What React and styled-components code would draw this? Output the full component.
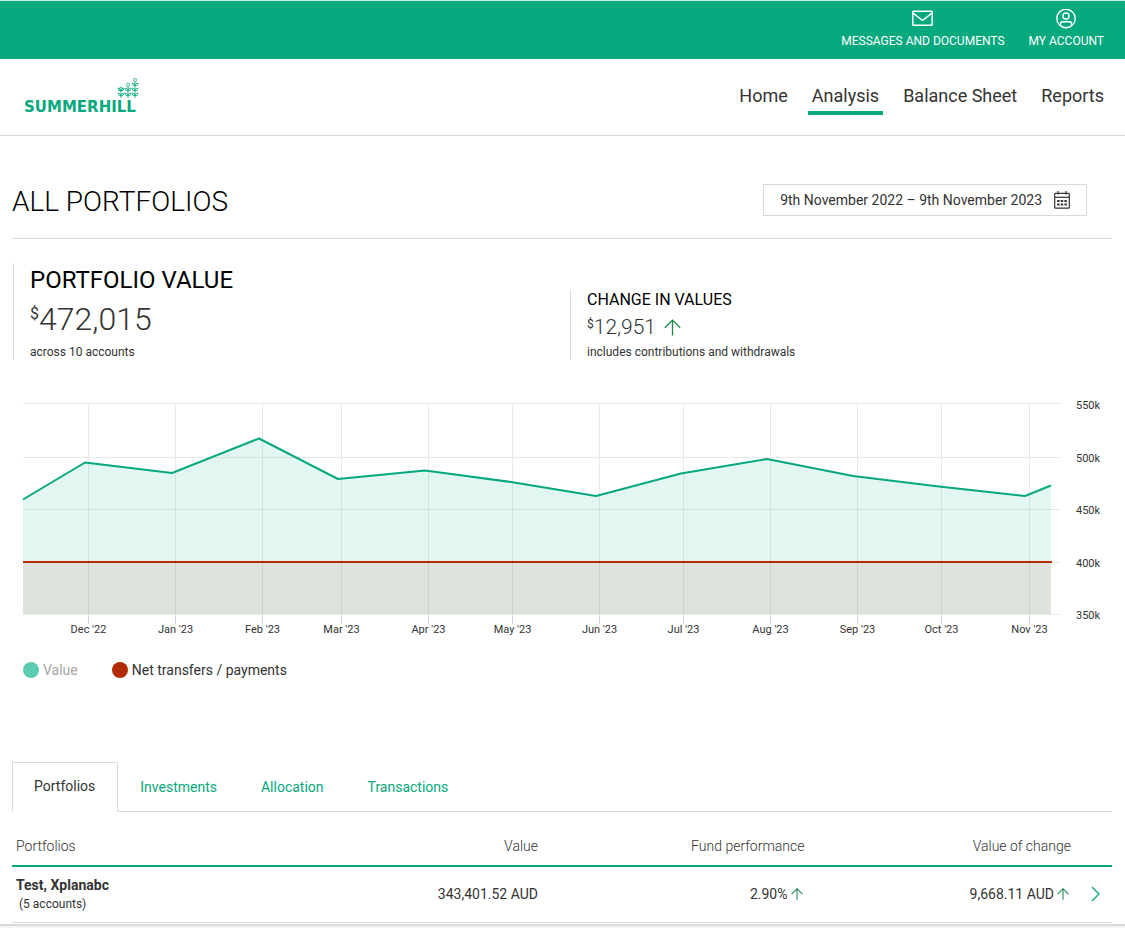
import React from "react";
import styled, { createGlobalStyle } from "styled-components";

const GREEN = "#06a87d";
const LINE = "#dadada";
const INK = "#333333";

const GlobalStyle = createGlobalStyle`
  *, *::before, *::after { box-sizing: border-box; }
  body {
    margin: 0;
    background: #ffffff;
    color: ${INK};
    font-family: Roboto, "Liberation Sans", sans-serif;
    font-size: 14px;
    line-height: 20px;
  }
  button { font: inherit; color: inherit; background: none; border: 0; padding: 0; cursor: pointer; }
  a { color: inherit; text-decoration: none; }
  h1, h2, h3, p { margin: 0; font-weight: 400; }
  svg { display: block; }
`;

const TopBar = styled.div`
  display: flex;
  justify-content: flex-end;
  gap: 24px;
  height: 59px;
  padding: 8px 21px 0;
  border-top: 1px solid #c4f3e8;
  background: ${GREEN};
`;

const TopLink = styled.a`
  display: flex;
  flex-direction: column;
  align-items: center;
  gap: 4px;
  color: #ffffff;
  font-size: 12px;
  line-height: 16px;
  text-transform: uppercase;
`;

const Header = styled.header`
  display: flex;
  align-items: center;
  justify-content: space-between;
  height: 77px;
  padding: 0 17px 0 25px;
  border-bottom: 1px solid ${LINE};
`;

const LogoLink = styled.a`
  display: block;
`;

const Nav = styled.nav`
  display: flex;
  gap: 16px;
  padding-top: 4px;
`;

const NavLink = styled.a`
  padding: 0 4px 3px;
  border-bottom: 4px solid ${(p) => (p.$active ? GREEN : "transparent")};
  font-size: 18px;
  line-height: 24px;
`;

const Page = styled.main`
  padding: 48px 13px 0 12px;
`;

const TitleRow = styled.div`
  display: flex;
  align-items: flex-start;
  justify-content: space-between;
  padding: 0 25px 18px 0;
  border-bottom: 1px solid ${LINE};
`;

const PageTitle = styled.h1`
  color: #000000;
  font-size: 28px;
  font-weight: 300;
  line-height: 36px;
`;

const DateButton = styled.button`
  && {
    display: flex;
    align-items: center;
    gap: 12px;
    height: 32px;
    padding: 0 16px;
    border: 1px solid ${LINE};
  }
`;

const Stats = styled.section`
  display: grid;
  grid-template-columns: 557fr 542fr;
  align-items: end;
  padding: 24px 0 0 1px;
`;

const Stat = styled.div`
  display: flex;
  flex-direction: column;
  padding-left: 16px;
  border-left: 1px solid ${LINE};
`;

const StatTitle = styled.h2`
  color: #000000;
  font-size: ${(p) => (p.$large ? "24px" : "16px")};
  line-height: ${(p) => (p.$large ? "34px" : "20px")};
`;

const StatValue = styled.p`
  display: flex;
  align-items: flex-start;
  padding-bottom: ${(p) => (p.$large ? "3px" : "0")};
  font-size: ${(p) => (p.$large ? "32px" : "21px")};
  font-weight: 300;
  line-height: ${(p) => (p.$large ? "44px" : "34px")};
`;

const Currency = styled.span`
  font-size: ${(p) => (p.$large ? "16px" : "12px")};
  font-weight: 400;
  line-height: ${(p) => (p.$large ? "34px" : "28px")};
`;

const ValueIcon = styled.span`
  padding: 9px 0 0 8px;
`;

const StatNote = styled.p`
  font-size: 12px;
  line-height: 16px;
`;

const ChartBox = styled.section`
  padding-top: 36px;
`;

const Chart = styled.svg`
  width: 100%;
  height: auto;
  text {
    fill: ${INK};
    font-size: 11px;
  }
`;

const Legend = styled.div`
  display: flex;
  gap: 34px;
  padding: 20px 11px 0;
`;

const LegendItem = styled.button`
  && {
    display: flex;
    align-items: center;
    gap: 4px;
    color: ${(p) => (p.$muted ? "#a6a6a6" : INK)};
  }
`;

const Dot = styled.span`
  width: 16px;
  height: 16px;
  border-radius: 50%;
  background: ${(p) => p.$color};
`;

const Tabs = styled.div`
  display: flex;
  margin-top: 82px;
  box-shadow: inset 0 -1px 0 ${LINE};
`;

const Tab = styled.button`
  && {
    height: 50px;
    padding: ${(p) => (p.$active ? "0 22px 4px 21px" : "0 21px 2px")};
    border: 1px solid transparent;
    border-bottom: 0;
    color: ${GREEN};
    ${(p) =>
      p.$active &&
      `
      border-color: ${LINE};
      background: #ffffff;
      color: ${INK};
    `}
  }
`;

const Table = styled.table`
  width: 100%;
  margin-top: 14px;
  border-collapse: collapse;
  table-layout: fixed;
`;

const HeadCell = styled.th`
  height: 40px;
  padding: 0 7px 0 4px;
  border-bottom: 2px solid ${GREEN};
  font-weight: 300;
  text-align: ${(p) => (p.$start ? "left" : "right")};
  width: ${(p) => (p.$narrow ? "34px" : "auto")};
`;

const Cell = styled.td`
  height: 56px;
  padding: 0 7px 0 4px;
  border-bottom: 1px solid ${LINE};
  text-align: ${(p) => (p.$start ? "left" : "right")};
`;

const Amount = styled.span`
  display: flex;
  align-items: center;
  justify-content: flex-end;
  gap: 3px;
  padding-right: 2px;
`;

const AccountName = styled.a`
  display: block;
  font-weight: 700;
`;

const AccountNote = styled.span`
  display: block;
  padding-left: 3px;
  font-size: 12px;
  line-height: 18px;
`;

const OpenButton = styled.button`
  && {
    display: block;
    margin-left: 9px;
  }
`;

const PageEnd = styled.footer`
  height: 5px;
  margin-top: 1px;
  border-top: 2px solid #d9d9d9;
  background: #f5f5f5;
`;

function Sprig({ x, top, rows }) {
  const leaves = Array.from({ length: rows }, (_, i) => 18 - i * 5);
  return (
    <g fill="none" stroke={GREEN} strokeOpacity="0.75">
      <path d={`M${x} 20V${top + 4}`} />
      <ellipse cx={x} cy={top + 2} rx="1.4" ry="2" />
      {leaves.map((y) => (
        <path key={y} d={`M${x} ${y}q-3 0-3-3q3 0 3 3q3 0 3-3q-3 0-3 3`} />
      ))}
    </g>
  );
}

function Logo() {
  return (
    <svg width="118" height="38" viewBox="0 0 118 38" role="img" aria-label="Summerhill">
      <Sprig x={96} top={9} rows={2} />
      <Sprig x={103} top={5} rows={2} />
      <Sprig x={110} top={0} rows={3} />
      <text x="-1" y="34" fill={GREEN} fontFamily="DejaVu Sans, sans-serif" fontWeight="700" fontSize="15">
        SUMMERHILL
      </text>
    </svg>
  );
}

function MailIcon() {
  return (
    <svg width="21" height="20" viewBox="0 0 21 20" fill="none" stroke="currentColor" strokeWidth="1.5">
      <rect x="0.8" y="2.3" width="19.4" height="13.9" rx="0.8" />
      <path d="M1 4l8.3 6.6q1.2.8 2.4 0L20 4" />
    </svg>
  );
}

function AccountIcon() {
  return (
    <svg width="20" height="20" viewBox="0 0 20 20" fill="none" stroke="currentColor" strokeWidth="1.4">
      <circle cx="10" cy="9.5" r="9.2" />
      <circle cx="10" cy="7.1" r="3.1" />
      <path d="M4.4 16.1v-1.2q0-2.2 2.3-2.2h6.6q2.3 0 2.3 2.2v1.2" />
    </svg>
  );
}

function CalendarIcon() {
  return (
    <svg width="16" height="18" viewBox="0 0 16 18" fill="none" stroke="currentColor" strokeWidth="1.2">
      <path d="M4 0v3.4M12 0v3.4" />
      <rect x="0.7" y="2.3" width="14.6" height="14.9" rx="0.8" />
      <path d="M1 6.3h14" />
      <path d="M3.2 10h2.4M6.8 10h2.4M10.4 10h2.4M3.2 13.5h2.4M6.8 13.5h2.4M10.4 13.5h2.4" strokeWidth="2.2" />
    </svg>
  );
}

function UpArrow({ size }) {
  return (
    <svg width={size} height={size} viewBox="0 0 16 16" fill="none" stroke="#19884c" strokeWidth={size > 14 ? 1.2 : 1.4}>
      <path d="M8 15.5V1M0.8 8.2L8 1l7.2 7.2" />
    </svg>
  );
}

function Chevron() {
  return (
    <svg width="9" height="16" viewBox="0 0 9 16" fill="none" stroke={GREEN} strokeWidth="1.3">
      <path d="M1 1l7 7-7 7" />
    </svg>
  );
}

const MONTHS = [
  ["Dec '22", 76.5], ["Jan '23", 163.5], ["Feb '23", 250.5], ["Mar '23", 329.5],
  ["Apr '23", 416.5], ["May '23", 500.5], ["Jun '23", 587.5], ["Jul '23", 671.5],
  ["Aug '23", 758.5], ["Sep '23", 845.5], ["Oct '23", 929.5], ["Nov '23", 1017.5],
];

const LEVELS = [
  ["550k", 7.5], ["500k", 61.5], ["450k", 113.5], ["400k", 166.5], ["350k", 218.5],
];

const VALUES = [
  [11, 103.5], [73, 66.5], [160, 77], [247, 42.5], [326, 83], [413, 74.5], [499, 86],
  [584, 100], [669, 77.5], [755, 63], [841, 80], [927, 90.5], [1013, 100], [1039, 89.5],
];

function ValueChart() {
  const line = VALUES.map(([x, y]) => `${x},${y}`).join(" ");
  return (
    <Chart viewBox="0 0 1100 244" role="img" aria-label="Portfolio value over time">
      {LEVELS.map(([label, y]) => (
        <path key={label} d={`M11 ${y}H1049`} stroke="#e9e9e9" />
      ))}
      {MONTHS.map(([label, x]) => (
        <g key={label}>
          <path d={`M${x} 8V218`} stroke="#e9e9e9" />
          <path d={`M${x} 219V228`} stroke="#ccd6eb" />
        </g>
      ))}
      <polygon points={`11,218 ${line} 1039,218`} fill="#00b388" fillOpacity="0.11" />
      <rect x="11" y="166" width="1028" height="52" fill="#b52c00" fillOpacity="0.09" />
      <polyline points={line} fill="none" stroke={GREEN} strokeWidth="2" strokeLinejoin="round" />
      <path d="M11 166H1040" stroke="#b52c00" strokeWidth="2" />
      {LEVELS.map(([label], i) => (
        <text key={label} x="1064" y={13 + Math.round(i * 52.5)}>
          {label}
        </text>
      ))}
      {MONTHS.map(([label, x]) => (
        <text key={label} x={x} y="237" textAnchor="middle">
          {label}
        </text>
      ))}
    </Chart>
  );
}

export default function App() {
  return (
    <>
      <GlobalStyle />
      <TopBar>
        <TopLink href="#messages">
          <MailIcon />
          Messages and documents
        </TopLink>
        <TopLink href="#account">
          <AccountIcon />
          My account
        </TopLink>
      </TopBar>
      <Header>
        <LogoLink href="#home">
          <Logo />
        </LogoLink>
        <Nav>
          <NavLink href="#home">Home</NavLink>
          <NavLink href="#analysis" $active aria-current="page">Analysis</NavLink>
          <NavLink href="#balance">Balance Sheet</NavLink>
          <NavLink href="#reports">Reports</NavLink>
        </Nav>
      </Header>
      <Page>
        <TitleRow>
          <PageTitle>ALL PORTFOLIOS</PageTitle>
          <DateButton type="button">
            9th November 2022 – 9th November 2023
            <CalendarIcon />
          </DateButton>
        </TitleRow>
        <Stats>
          <Stat>
            <StatTitle $large>PORTFOLIO VALUE</StatTitle>
            <StatValue $large>
              <Currency $large>$</Currency>472,015
            </StatValue>
            <StatNote>across 10 accounts</StatNote>
          </Stat>
          <Stat>
            <StatTitle>CHANGE IN VALUES</StatTitle>
            <StatValue>
              <Currency>$</Currency>12,951
              <ValueIcon>
                <UpArrow size={17} />
              </ValueIcon>
            </StatValue>
            <StatNote>includes contributions and withdrawals</StatNote>
          </Stat>
        </Stats>
        <ChartBox>
          <ValueChart />
          <Legend>
            <LegendItem type="button" $muted>
              <Dot $color="#5bccb0" />
              Value
            </LegendItem>
            <LegendItem type="button">
              <Dot $color="#b02b00" />
              Net transfers / payments
            </LegendItem>
          </Legend>
        </ChartBox>
        <Tabs role="tablist">
          <Tab role="tab" type="button" aria-selected="true" $active>Portfolios</Tab>
          <Tab role="tab" type="button" aria-selected="false">Investments</Tab>
          <Tab role="tab" type="button" aria-selected="false">Allocation</Tab>
          <Tab role="tab" type="button" aria-selected="false">Transactions</Tab>
        </Tabs>
        <Table>
          <thead>
            <tr>
              <HeadCell scope="col" $start>Portfolios</HeadCell>
              <HeadCell scope="col">Value</HeadCell>
              <HeadCell scope="col">Fund performance</HeadCell>
              <HeadCell scope="col">Value of change</HeadCell>
              <HeadCell $narrow aria-label="Open" />
            </tr>
          </thead>
          <tbody>
            <tr>
              <Cell $start>
                <AccountName href="#account">Test, Xplanabc</AccountName>
                <AccountNote>(5 accounts)</AccountNote>
              </Cell>
              <Cell>343,401.52 AUD</Cell>
              <Cell>
                <Amount>2.90% <UpArrow size={12} /></Amount>
              </Cell>
              <Cell>
                <Amount>9,668.11 AUD <UpArrow size={12} /></Amount>
              </Cell>
              <Cell>
                <OpenButton type="button" aria-label="Open Test, Xplanabc">
                  <Chevron />
                </OpenButton>
              </Cell>
            </tr>
          </tbody>
        </Table>
      </Page>
      <PageEnd />
    </>
  );
}
